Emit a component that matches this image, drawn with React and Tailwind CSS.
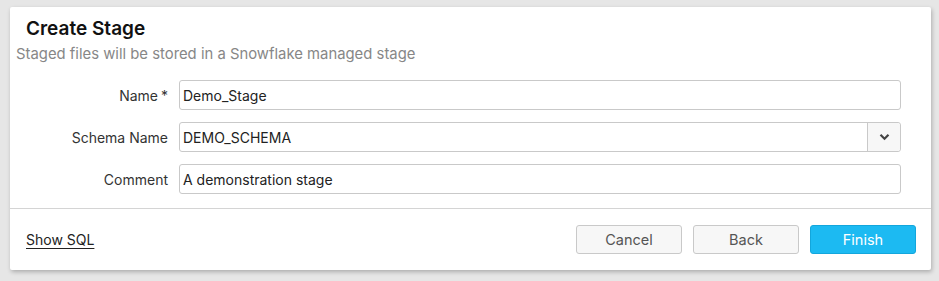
import React from "react";

export default function App() {
  return (
    <div className="w-[939px] h-[281px] bg-[#e6e6e6] pt-[7px] pl-[10px] font-['Inter',sans-serif]">
      <div className="w-[921px] h-[263px] bg-white rounded-[2px] shadow-[1px_2px_4px_rgba(0,0,0,0.25)] flex flex-col">
        <div className="pt-[9px] pl-[6px] pr-[30px]">
          <div className="pl-[10px] text-[19px] font-semibold text-[#111] leading-[26px]">Create Stage</div>
          <div className="mt-[2px] text-[14.85px] text-[#878787] leading-[20px]">Staged files will be stored in a Snowflake managed stage</div>
        </div>
        <div className="mt-[16px] flex flex-col gap-[12px] pr-[30px]">
          <div className="flex items-center">
            <div className="w-[169px] text-right pr-[11px] text-[14px] text-[#333]">Name<span className="ml-[3px]">*</span></div>
            <div className="flex-1 h-[30px] border border-[#c9c9c9] rounded-[3px] flex items-center px-[3px] text-[14px] text-[#222]">Demo_Stage</div>
          </div>
          <div className="flex items-center">
            <div className="w-[169px] text-right pr-[11px] text-[14px] text-[#333]">Schema Name</div>
            <div className="flex-1 h-[30px] border border-[#c9c9c9] rounded-[3px] flex items-stretch text-[14px] text-[#222]">
              <div className="flex-1 flex items-center px-[3px]">DEMO_SCHEMA</div>
              <div className="w-[33px] border-l border-[#c9c9c9] bg-[#f7f7f7] rounded-r-[3px] flex items-center justify-center">
                <svg width="11" height="8" viewBox="0 0 11 8"><path d="M1.5 1.8 L5.5 5.8 L9.5 1.8" fill="none" stroke="#444" strokeWidth="2.2" /></svg>
              </div>
            </div>
          </div>
          <div className="flex items-center">
            <div className="w-[169px] text-right pr-[11px] text-[14px] text-[#333]">Comment</div>
            <div className="flex-1 h-[30px] border border-[#c9c9c9] rounded-[3px] flex items-center px-[3px] text-[14px] text-[#222]">A demonstration stage</div>
          </div>
        </div>
        <div className="mt-[14px] border-t border-[#d4d4d4]"></div>
        <div className="flex-1 flex items-center pl-[16px] pr-[15px]">
          <div className="text-[14px] text-[#222] underline underline-offset-[3px]">Show SQL</div>
          <div className="ml-auto flex gap-[11px]">
            <button className="w-[106px] h-[29px] border border-[#c9c9c9] rounded-[3px] bg-[#f7f7f7] text-[14.5px] text-[#555]">Cancel</button>
            <button className="w-[106px] h-[29px] border border-[#c9c9c9] rounded-[3px] bg-[#f7f7f7] text-[14.5px] text-[#555]">Back</button>
            <button className="w-[106px] h-[29px] border border-[#13a6dc] rounded-[3px] bg-[#1cbaf2] text-[14.5px] text-white">Finish</button>
          </div>
        </div>
      </div>
    </div>
  );
}
